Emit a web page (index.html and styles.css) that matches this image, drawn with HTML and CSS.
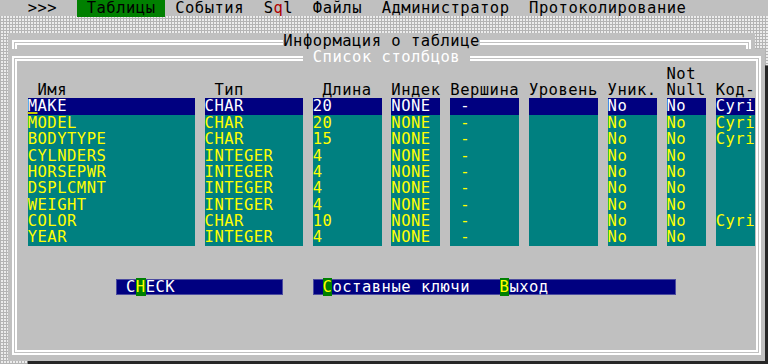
FILE: index.html
```html
<!DOCTYPE html>
<html lang="ru">
<head>
    <meta charset="UTF-8">
    <meta name="viewport" content="width=device-width, initial-scale=1.0">
    <title>Информация о таблице</title>
    <link rel="stylesheet" href="styles.css">
</head>
<body>
    <div class="menu">  &gt;&gt;&gt;  <span class="sel"> Таблицы </span> События  S<span class="red">q</span>l  Файлы  Администратор  Протоколирование</div>

    <div class="desk">
        <!-- outer window, only its top line is visible -->
        <div class="info">
            <span class="edge edge-l"></span><span class="title">Информация о таблице</span><span class="edge edge-r"></span>
        </div>

        <div class="list">
            <div class="list-top">
                <span class="edge edge-l"></span><span class="title light"> Список столбцов </span><span class="edge edge-r"></span>
            </div>
            <div class="list-body">
                <div class="row head">
                    <span class="nn">Not</span>
                </div>
                <div class="row head">
                    <span> Имя</span><span> Тип</span><span> Длина</span><span>Индек</span><span>Вершина</span><span>Уровень</span><span>Уник.</span><span>Null</span><span>Код-</span>
                </div>

                <div class="row data cur">
                    <span><span class="cursor">M</span>AKE</span><span>CHAR</span><span>20</span><span>NONE</span><span> -</span><span></span><span>No</span><span>No</span><span>Cyri</span>
                </div>
                <div class="row data">
                    <span>MODEL</span><span>CHAR</span><span>20</span><span>NONE</span><span> -</span><span></span><span>No</span><span>No</span><span>Cyri</span>
                </div>
                <div class="row data">
                    <span>BODYTYPE</span><span>CHAR</span><span>15</span><span>NONE</span><span> -</span><span></span><span>No</span><span>No</span><span>Cyri</span>
                </div>
                <div class="row data">
                    <span>CYLNDERS</span><span>INTEGER</span><span>4</span><span>NONE</span><span> -</span><span></span><span>No</span><span>No</span><span></span>
                </div>
                <div class="row data">
                    <span>HORSEPWR</span><span>INTEGER</span><span>4</span><span>NONE</span><span> -</span><span></span><span>No</span><span>No</span><span></span>
                </div>
                <div class="row data">
                    <span>DSPLCMNT</span><span>INTEGER</span><span>4</span><span>NONE</span><span> -</span><span></span><span>No</span><span>No</span><span></span>
                </div>
                <div class="row data">
                    <span>WEIGHT</span><span>INTEGER</span><span>4</span><span>NONE</span><span> -</span><span></span><span>No</span><span>No</span><span></span>
                </div>
                <div class="row data">
                    <span>COLOR</span><span>CHAR</span><span>10</span><span>NONE</span><span> -</span><span></span><span>No</span><span>No</span><span>Cyri</span>
                </div>
                <div class="row data">
                    <span>YEAR</span><span>INTEGER</span><span>4</span><span>NONE</span><span> -</span><span></span><span>No</span><span>No</span><span></span>
                </div>

                <div class="buttons">
                    <span class="btn btn-check"> C<span class="key">H</span>ECK</span>
                    <span class="btn btn-keys"> <span class="key">С</span>оставные ключи   <span class="key">В</span>ыход</span>
                </div>
            </div>
        </div>
    </div>
</body>
</html>
```

FILE: styles.css
```css
:root {
    --c: 9.83px;   /* one text cell */
    --r: 16.4px;   /* one text row */
}

body {
    margin: 0;
    height: 364px;
    overflow: hidden;
    font-family: "DejaVu Sans Mono", monospace;
    font-size: 15.5px;
    line-height: 16.4px;
    letter-spacing: 0.5px;
    color: #000;
    background-color: #ececec;
    background-image:
        linear-gradient(90deg, #b4b4b4 1px, transparent 1px),
        linear-gradient(#b4b4b4 1px, transparent 1px);
    background-size: 3px 3px;
}

.menu {
    height: var(--r);
    padding-left: 8px;
    background: #c0c0c0;
    white-space: pre;
}

.menu .sel {
    background: #008000;
}

.menu .red {
    color: #b00000;
}

.desk {
    padding: var(--r) 0 0 8px;
}

/* frames */
.info,
.list-top {
    display: flex;
    height: var(--r);
}

.info {
    width: calc(76 * var(--c));
    background: #c0c0c0;
}

.edge {
    flex: 1;
    margin-top: 7px;
    border-top: 5px double #fff;
}

.edge-l {
    margin-left: 3.7px;
    border-left: 5px double #fff;
}

.edge-r {
    margin-right: 3.7px;
    border-right: 5px double #fff;
}

.title {
    flex: none;
    white-space: pre;
}

.title.light {
    color: #fff;
}

.list {
    width: calc(77 * var(--c));
    height: calc(19 * var(--r));
    background: #c0c0c0;
    box-shadow: calc(2 * var(--c)) var(--r) 0 #262626;
}

.list-body {
    height: calc(17 * var(--r) + 5.6px);
    margin: 0 3.7px;
    padding-left: calc(2 * var(--c) - 8.7px);
    border: 5px double #fff;
    border-top: none;
}

/* table */
.row {
    display: grid;
    grid-template-columns:
        calc(17 * var(--c)) calc(10 * var(--c)) calc(7 * var(--c))
        calc(5 * var(--c)) calc(7 * var(--c)) calc(7 * var(--c))
        calc(5 * var(--c)) calc(4 * var(--c)) calc(4 * var(--c));
    column-gap: var(--c);
    height: var(--r);
    white-space: pre;
}

.row.head .nn {
    grid-column: 8;
}

.row.data > span {
    background: #008080;
    color: #ffff00;
}

.row.data.cur > span {
    background: #000080;
    color: #fff;
}

.cursor {
    text-decoration: underline 2px #c8c800;
    text-underline-offset: 1px;
}

/* buttons */
.buttons {
    display: flex;
    height: var(--r);
    margin-top: calc(2 * var(--r));
    white-space: pre;
}

.btn {
    background: #000080;
    color: #fff;
    box-shadow: inset 0 0 0 1px rgba(150, 150, 190, 0.5);
}

.btn-check {
    width: calc(17 * var(--c));
    margin-left: calc(9 * var(--c));
}

.btn-keys {
    width: calc(37 * var(--c));
    margin-left: calc(3 * var(--c));
}

.key {
    background: #008000;
    color: #ffff00;
}
```
